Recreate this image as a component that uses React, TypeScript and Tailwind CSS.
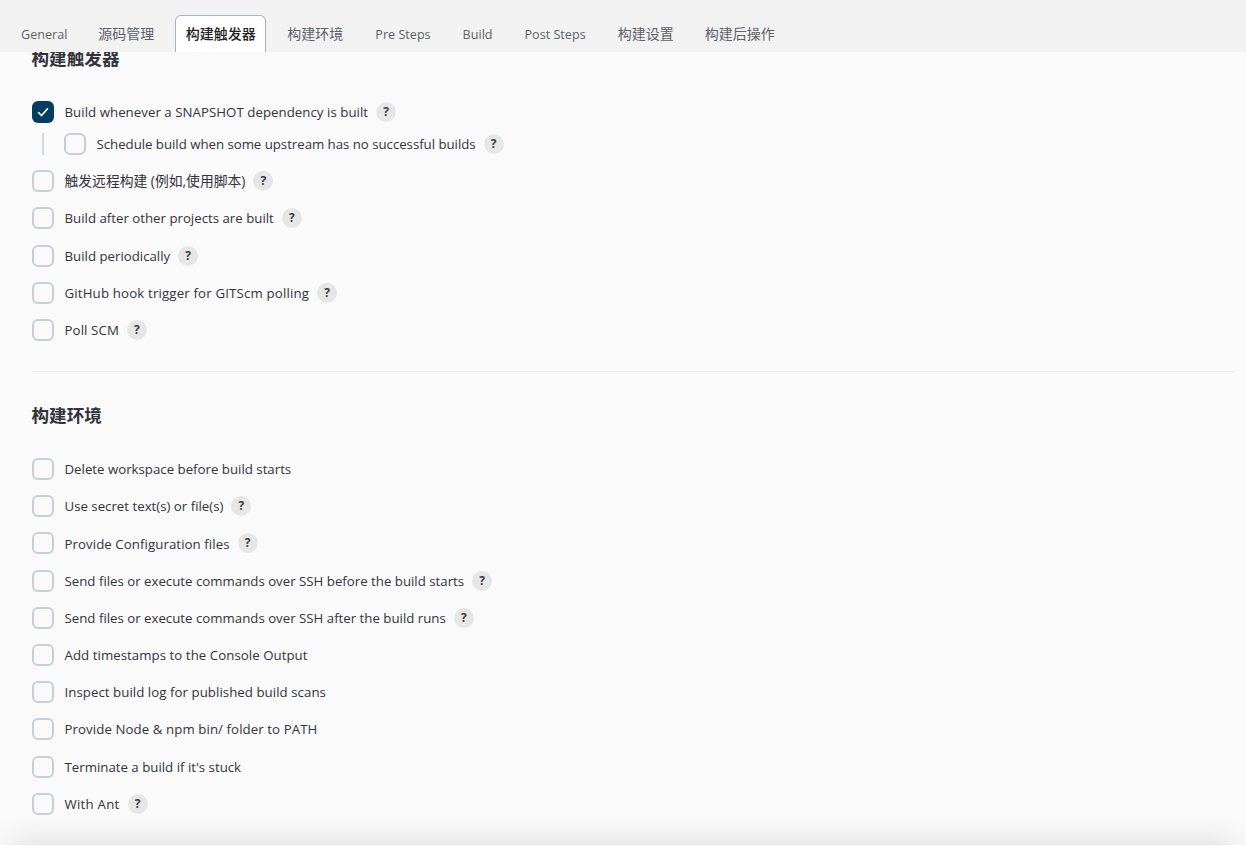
import React from 'react';

const FONT = { fontFamily: '"Open Sans", "Noto Sans CJK SC", sans-serif' };

const LATIN_TAB = 'flex h-[37px] items-center pt-[3px] text-[12.6px] text-[#5c6168]';
const CJK_TAB = 'flex h-[37px] items-center pb-[1px] text-[14px] text-[#5c6168]';

const tabs = [
  { label: 'General', className: `${LATIN_TAB} ml-[1px] pr-[15px] pl-[16px]` },
  { label: '源码管理', className: `${CJK_TAB} px-[16px]` },
  { label: '构建触发器', className: '', active: true },
  { label: '构建环境', className: `${CJK_TAB} px-[16px]` },
  { label: 'Pre Steps', className: `${LATIN_TAB} px-[16px]` },
  { label: 'Build', className: `${LATIN_TAB} px-[16px]` },
  { label: 'Post Steps', className: `${LATIN_TAB} px-[16px]` },
  { label: '构建设置', className: `${CJK_TAB} pr-[15px] pl-[16px]` },
  { label: '构建后操作', className: `${CJK_TAB} px-[16px]` },
];

const triggers = [
  { label: 'Build after other projects are built', help: true },
  { label: 'Build periodically', help: true },
  { label: 'GitHub hook trigger for GITScm polling', help: true, tracking: 'tracking-[0.16px]' },
  { label: 'Poll SCM', help: true, tracking: 'tracking-[0.1px]' },
];

const envs = [
  { label: 'Delete workspace before build starts', help: false },
  { label: 'Use secret text(s) or file(s)', help: true },
  { label: 'Provide Configuration files', help: true, tracking: 'tracking-[0.07px]' },
  { label: 'Send files or execute commands over SSH before the build starts', help: true },
  { label: 'Send files or execute commands over SSH after the build runs', help: true },
  { label: 'Add timestamps to the Console Output', help: false, tracking: 'tracking-[0.05px]' },
  { label: 'Inspect build log for published build scans', help: false, tracking: 'tracking-[0.05px]' },
  { label: 'Provide Node & npm bin/ folder to PATH', help: false, tracking: 'tracking-[0.08px]' },
  { label: "Terminate a build if it's stuck", help: false },
  { label: 'With Ant', help: true, tracking: 'tracking-[0.25px]' },
];

const Help = () => (
  <span className="ml-2 flex h-5 w-5 shrink-0 items-center justify-center rounded-full bg-[#e6e6e6] text-[12px] font-bold text-[#3c3c46]">
    ?
  </span>
);

const Box = ({ checked }: { checked?: boolean }) =>
  checked ? (
    <span className="flex h-[22px] w-[22px] shrink-0 items-center justify-center rounded-[6px] bg-[#053c61]">
      <svg width="12" height="12" viewBox="0 0 12 12" fill="none">
        <path d="M1.5 6.5L4.6 9.6L10.5 2.8" stroke="#fff" strokeWidth="1.6" strokeLinecap="round" strokeLinejoin="round" />
      </svg>
    </span>
  ) : (
    <span className="block h-[22px] w-[22px] shrink-0 rounded-[6px] border-2 border-[#c5d0d6] bg-[#fafafa]" />
  );

const Row = ({ label, help, checked, tracking }: { label: string; help?: boolean; checked?: boolean; tracking?: string }) => (
  <div className="flex h-[37.2px] items-center">
    <Box checked={checked} />
    <span className={`ml-[10.5px] pt-[2px] text-[13.25px] text-[#33333d] ${tracking ?? ''}`}>{label}</span>
    {help && <Help />}
  </div>
);

const App: React.FC = () => {
  return (
    <div className="h-[851px] w-[1246px] overflow-hidden bg-white" style={FONT}>
      <div className="relative z-10 flex h-[52px] items-end bg-[#f2f2f3] pl-[4px]">
        {tabs.map((tab) =>
          tab.active ? (
            <div
              key={tab.label}
              className="mr-[5px] ml-[5px] flex h-[37px] w-[91px] items-center justify-center rounded-t-[6px] border border-b-0 border-[#a9b3bc] bg-white pb-[1px] text-[14px] font-medium text-[#222]"
            >
              {tab.label}
            </div>
          ) : (
            <div key={tab.label} className={tab.className}>
              {tab.label}
            </div>
          ),
        )}
      </div>

      <div className="relative h-[793px] overflow-hidden bg-[#fafafa] pr-[12px] pl-[32px]">
        <h2 className="mt-[-7px] ml-[-0.5px] text-[17.6px] leading-[26px] font-semibold text-[#33333d]">构建触发器</h2>

        <div className="mt-[22.4px]">
          <Row label="Build whenever a SNAPSHOT dependency is built" help checked tracking="tracking-[0.04px]" />
          <div className="mb-[5.2px] flex h-[26.8px] items-center">
            <span className="ml-[10px] h-[22px] w-[2px] bg-[#d3dbe0]" />
            <span className="ml-[20px]">
              <Box />
            </span>
            <span className="ml-[10.5px] pt-[2px] text-[13.25px] tracking-[-0.03px] text-[#33333d]">
              Schedule build when some upstream has no successful builds
            </span>
            <Help />
          </div>
          <div className="flex h-[37.2px] items-center">
            <Box />
            <span className="ml-[10.5px] text-[13.8px] text-[#33333d]">触发远程构建 (例如,使用脚本)</span>
            <Help />
          </div>
          {triggers.map((t) => (
            <Row key={t.label} label={t.label} help={t.help} tracking={t.tracking} />
          ))}
        </div>

        <div className="mt-[22.9px] h-[1px] bg-[#efefef]" />

        <h2 className="mt-[29.5px] ml-[-0.5px] text-[17.6px] leading-[26px] font-semibold text-[#33333d]">构建环境</h2>

        <div className="mt-[22.6px]">
          {envs.map((t) => (
            <Row key={t.label} label={t.label} help={t.help} tracking={t.tracking} />
          ))}
        </div>

        {/* shadow of the sticky footer, which sits just below the fold */}
        <div className="absolute inset-x-[12px] bottom-[-20px] h-[20px] bg-[#eeeeee] shadow-[0_-2px_30px_rgba(0,0,0,0.15)]" />
      </div>
    </div>
  );
};

export default App;
